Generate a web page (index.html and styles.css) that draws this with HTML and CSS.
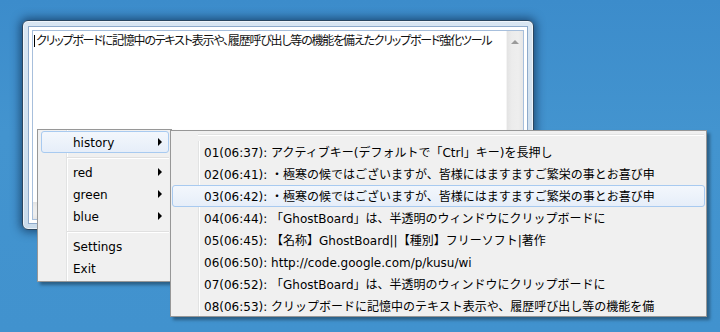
FILE: index.html
```html
<!DOCTYPE html>
<html lang="ja">
<head>
<meta charset="utf-8">
<link rel="stylesheet" href="styles.css">
</head>
<body>
<div class="desktop">
  <div class="window">
    <div class="frame-inner">
      <div class="editor">
        <div class="text-area">
          <p class="text"><span class="caret"></span>クリップボードに記憶中のテキスト表示や、履歴呼び出し等の機能を備えたクリップボード強化ツール</p>
        </div>
        <div class="vscroll"><span class="up-arrow"></span></div>
        <div class="hscroll"></div>
        <div class="corner"></div>
      </div>
    </div>
  </div>

  <div class="menu main-menu">
    <div class="item active"><span class="label">history</span><span class="arrow"></span></div>
    <div class="sep"></div>
    <div class="item"><span class="label">red</span><span class="arrow"></span></div>
    <div class="item"><span class="label">green</span><span class="arrow"></span></div>
    <div class="item"><span class="label">blue</span><span class="arrow"></span></div>
    <div class="sep"></div>
    <div class="item"><span class="label">Settings</span></div>
    <div class="item"><span class="label">Exit</span></div>
  </div>

  <div class="menu sub-menu">
    <div class="top-line"></div>
    <div class="item"><span class="label">01(06:37): アクティブキー(デフォルトで「Ctrl」キー)を長押し</span></div>
    <div class="item"><span class="label">02(06:41): ・極寒の候ではございますが、皆様にはますますご繁栄の事とお喜び申</span></div>
    <div class="item active"><span class="label">03(06:42): ・極寒の候ではございますが、皆様にはますますご繁栄の事とお喜び申</span></div>
    <div class="item"><span class="label">04(06:44): 「GhostBoard」は、半透明のウィンドウにクリップボードに</span></div>
    <div class="item"><span class="label">05(06:45): 【名称】GhostBoard||【種別】フリーソフト|著作</span></div>
    <div class="item"><span class="label">06(06:50): http://code.google.com/p/kusu/wi</span></div>
    <div class="item"><span class="label">07(06:52): 「GhostBoard」は、半透明のウィンドウにクリップボードに</span></div>
    <div class="item"><span class="label">08(06:53): クリップボードに記憶中のテキスト表示や、履歴呼び出し等の機能を備</span></div>
  </div>
</div>
</body>
</html>
```

FILE: styles.css
```css
* { box-sizing: border-box; }
html, body { margin: 0; padding: 0; }
body {
  width: 720px;
  height: 332px;
  overflow: hidden;
  background: #4192ce;
  font-family: "DejaVu Sans", "Noto Sans CJK JP", sans-serif;
}
.desktop {
  position: relative;
  width: 720px;
  height: 332px;
  background: linear-gradient(#3c8ccb, #4394cf 40%, #4192ce);
}

/* ---------- window ---------- */
.window {
  position: absolute;
  left: 22px;
  top: 20px;
  width: 512px;
  height: 210px;
  border: 1px solid #2a4660;
  border-radius: 6px;
  padding: 5px;
  background: linear-gradient(#d9e6f2, #c9dbeb);
  box-shadow: 0 0 10px 2px rgba(0, 20, 50, 0.55), inset 0 0 0 1px rgba(255,255,255,0.6);
}
.frame-inner {
  height: 100%;
  border: 1px solid #8eaacb;
  background: #fff;
  padding: 3px;
}
.editor {
  height: 100%;
  border: 1px solid #a7bfdc;
  display: grid;
  grid-template-columns: 1fr 17px;
  grid-template-rows: 1fr 17px;
  background: #fff;
}
.text-area { padding: 2px 0 0 1px; overflow: hidden; }
.text {
  margin: 0;
  font-family: "Noto Sans CJK JP", sans-serif;
  font-size: 12px;
  line-height: 14px;
  color: #111;
  font-feature-settings: "palt";
  letter-spacing: -1.2px;
  white-space: nowrap;
}
.caret {
  display: inline-block;
  width: 1px;
  height: 12px;
  background: #000;
  vertical-align: -2px;
  margin-right: 1px;
}
.vscroll {
  background: linear-gradient(to right, #e3e3e3, #ececec 30%, #eeeeee 70%, #e6e6e6);
  border-left: 1px solid #f4f4f4;
  display: flex;
  justify-content: center;
  padding-top: 9px;
}
.up-arrow {
  width: 0;
  height: 0;
  border-left: 4px solid transparent;
  border-right: 4px solid transparent;
  border-bottom: 4px solid #9a9a9a;
}
.hscroll {
  background: linear-gradient(#e3e3e3, #ececec 30%, #eeeeee 70%, #e6e6e6);
}
.corner { background: #f0f0f0; }

/* ---------- menus ---------- */
.menu {
  position: absolute;
  background-color: #f0f0f0;
  border: 1px solid #979797;
  box-shadow: 3px 3px 3px rgba(0, 0, 0, 0.35);
  font-size: 12px;
  color: #000;
}
.main-menu {
  left: 37px;
  top: 129px;
  width: 135px;
  height: 153px;
  padding: 1px 2px 2px 3px;
  background-image: linear-gradient(to right, transparent 28px, #e2e3e3 28px, #e2e3e3 29px, #fff 29px, #fff 30px, transparent 30px);
}
.sub-menu {
  left: 170px;
  top: 130px;
  width: 537px;
  height: 187px;
  padding: 1px;
  background-image: linear-gradient(to right, transparent 27px, #e2e3e3 27px, #e2e3e3 28px, #fff 28px, #fff 29px, transparent 29px);
  background-position: 0 3px;
  background-repeat: no-repeat;
  z-index: 2;
}
.top-line {
  height: 9px;
  margin-left: 26px;
  margin-right: 1px;
  background: linear-gradient(transparent 2px, #e2e3e3 2px, #e2e3e3 3px, #fff 3px, #fff 4px, transparent 4px);
  background-color: #f0f0f0;
}
.item {
  position: relative;
  height: 22px;
  display: flex;
  align-items: center;
  padding-left: 31px;
  border: 1px solid transparent;
  border-radius: 3px;
  white-space: nowrap;
}
.item.active {
  border-color: #a8caf0;
  background: linear-gradient(#f3f7fc, #e6eef9);
}
.label { line-height: 16px; padding-top: 1px; }
.arrow {
  margin-left: auto;
  margin-right: 6px;
  width: 0;
  height: 0;
  border-top: 4px solid transparent;
  border-bottom: 4px solid transparent;
  border-left: 4px solid #000;
}
.sep {
  height: 8px;
  margin-left: 26px;
  background: linear-gradient(transparent 4px, #e0e0e0 4px, #e0e0e0 5px, #fff 5px, #fff 6px, transparent 6px);
}
```
